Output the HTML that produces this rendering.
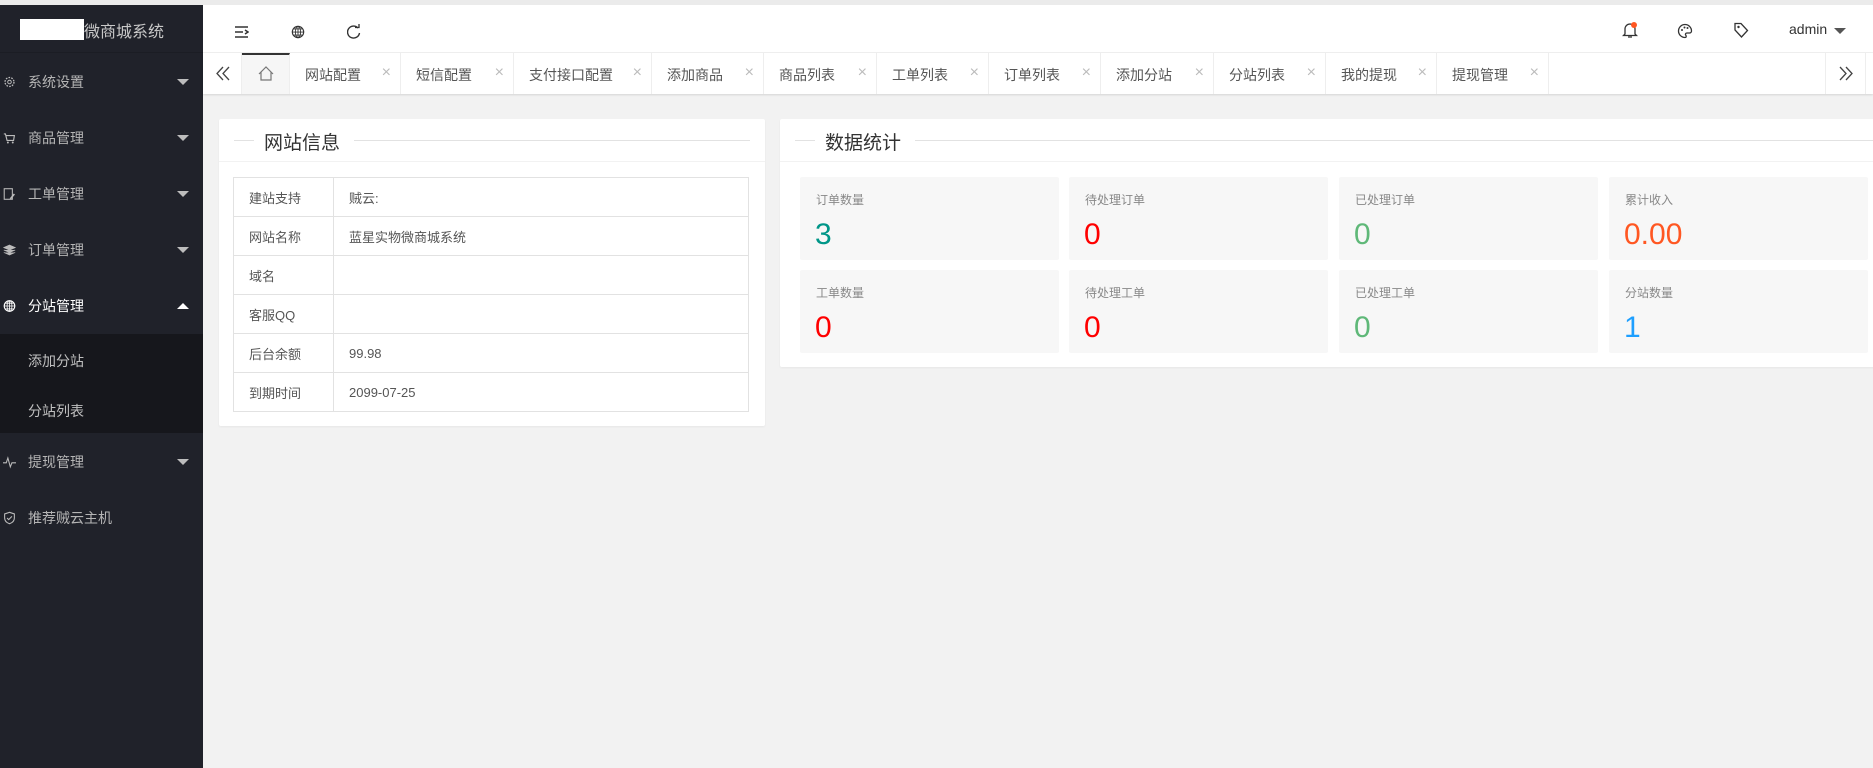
<!DOCTYPE html>
<html><head><meta charset="utf-8"><style>
*{margin:0;padding:0;box-sizing:border-box}
body{width:1873px;height:768px;overflow:hidden;background:#f2f2f2;font-family:"Liberation Sans","Noto Sans CJK SC",sans-serif;position:relative;font-size:14px;color:#333}
.topstrip{position:absolute;left:0;top:0;width:1873px;height:5px;background:#ebebeb}
.side{position:absolute;left:0;top:5px;width:203px;height:763px;background:#20222a}
.logo{position:absolute;left:0;top:0;width:203px;height:48px;border-bottom:1px solid #1b1d24}
.logo .w{position:absolute;left:20px;top:14px;width:64px;height:21px;background:#fff}
.logo span{position:absolute;left:84px;top:13px;font-size:16px;color:#c8c8c8}
.mi{position:absolute;left:0;width:203px;height:56px;color:#b5b5b5;font-size:14px}
.mi .t{position:absolute;left:28px;top:50%;transform:translateY(-50%)}
.mi .ic{position:absolute;left:3px;top:50%;transform:translateY(-50%);width:13px;height:13px}
.mi .ar{position:absolute;left:177px;top:50%;margin-top:-3px;width:0;height:0;border-left:6px solid transparent;border-right:6px solid transparent;border-top:6px solid #bdbdbd}
.mi .ar.up{border-top:0;border-bottom:6px solid #fff}
.sub{position:absolute;left:0;top:329px;width:203px;height:99px;background:#16171c}
.sub div{position:absolute;left:28px;color:#c0c0c0;font-size:14px}
.head{position:absolute;left:203px;top:5px;width:1670px;height:48px;background:#fff;border-bottom:1px solid #f0f0f0}
.tabs{position:absolute;left:203px;top:53px;width:1670px;height:41px;background:#fff;box-shadow:0 1px 2px rgba(0,0,0,.12)}
.tab{position:absolute;top:0;height:41px;border-right:1px solid #eee;color:#555;font-size:14px}
.tab .t{position:absolute;left:15px;top:12px}
.tab .x{position:absolute;right:9px;top:11px;color:#bbb;font-size:16px}
.card{position:absolute;background:#fff;border-radius:2px;box-shadow:0 1px 2px rgba(0,0,0,.05)}
.ch{position:absolute;left:0;top:0;right:0;height:43px;border-bottom:1px solid #f2f2f2}
.ch .l1{position:absolute;top:21px;height:1px;background:#e2e2e2}
.ch .tt{position:absolute;top:9px;font-size:19px;color:#333}
table{position:absolute;border-collapse:collapse;font-size:13px;color:#555}
td{border:1px solid #e2e2e2;height:39px;padding-left:15px}
.box{position:absolute;width:259px;height:83px;background:#f7f7f7;border-radius:2px}
.box .lb{position:absolute;left:16px;top:14px;font-size:12px;color:#888}
.box .n{position:absolute;left:15px;top:41px;font-size:30px}
</style></head><body>
<div class="topstrip"></div>
<div class="side">
 <div class="logo"><div class="w"></div><span>微商城系统</span></div>
 <div class="mi" style="top:49px"><svg class="ic" viewBox="0 0 16 16"><circle cx="8" cy="8" r="5.5" fill="none" stroke="#bbb" stroke-width="1.6" stroke-dasharray="2 1.5"/><circle cx="8" cy="8" r="2.2" fill="none" stroke="#bbb" stroke-width="1.2"/></svg><span class="t">系统设置</span><i class="ar"></i></div>
 <div class="mi" style="top:105px"><svg class="ic" viewBox="0 0 16 16"><path d="M1 3h2l2 8h8l1-6H4" fill="none" stroke="#bbb" stroke-width="1.4"/><circle cx="6" cy="13.5" r="1.2" fill="#bbb"/><circle cx="12" cy="13.5" r="1.2" fill="#bbb"/></svg><span class="t">商品管理</span><i class="ar"></i></div>
 <div class="mi" style="top:161px"><svg class="ic" viewBox="0 0 16 16"><rect x="1.5" y="1.5" width="10" height="13" fill="none" stroke="#bbb" stroke-width="1.3"/><path d="M9 14l5-6" stroke="#bbb" stroke-width="2"/></svg><span class="t">工单管理</span><i class="ar"></i></div>
 <div class="mi" style="top:217px"><svg class="ic" viewBox="0 0 16 16"><path d="M8 2l7 3-7 3-7-3z M1 8l7 3 7-3 M1 11l7 3 7-3" fill="#bbb" stroke="#bbb" stroke-width="1"/></svg><span class="t">订单管理</span><i class="ar"></i></div>
 <div class="mi" style="top:273px;color:#fff"><svg class="ic" viewBox="0 0 16 16"><circle cx="8" cy="8" r="6.5" fill="none" stroke="#fff" stroke-width="1.4"/><path d="M1.5 8h13M8 1.5v13M3 4.5h10M3 11.5h10" stroke="#fff" stroke-width="1"/><ellipse cx="8" cy="8" rx="3" ry="6.5" fill="none" stroke="#fff"/></svg><span class="t">分站管理</span><i class="ar up"></i></div>
 <div class="sub"><div style="top:17px">添加分站</div><div style="top:67px">分站列表</div></div>
 <div class="mi" style="top:429px"><svg class="ic" viewBox="0 0 16 16"><path d="M0 9h4l2-6 3 11 2-5h5" fill="none" stroke="#bbb" stroke-width="1.3"/></svg><span class="t">提现管理</span><i class="ar"></i></div>
 <div class="mi" style="top:485px"><svg class="ic" viewBox="0 0 16 16"><path d="M8 1l6 2v5c0 4-3 6-6 7-3-1-6-3-6-7V3z" fill="none" stroke="#bbb" stroke-width="1.3"/><path d="M5 8l2 2 4-4" fill="none" stroke="#bbb" stroke-width="1.3"/></svg><span class="t">推荐贼云主机</span></div>
</div>
<div class="head">
 <svg style="position:absolute;left:32px;top:21px" width="14" height="12" viewBox="0 0 14 12"><path d="M0 1h13M0 6h8M0 11h13M10 4l3 2-3 2" fill="none" stroke="#333" stroke-width="1.5"/></svg>
 <svg style="position:absolute;left:88px;top:20px" width="14" height="14" viewBox="0 0 16 16"><circle cx="8" cy="8" r="6.5" fill="none" stroke="#333" stroke-width="1.3"/><ellipse cx="8" cy="8" rx="3" ry="6.5" fill="none" stroke="#333"/><path d="M1.5 8h13M8 1.5v13M3 4.5h10M3 11.5h10" stroke="#333" stroke-width="1"/></svg>
 <svg style="position:absolute;left:144px;top:19px" width="14" height="16" viewBox="0 0 14 16"><path d="M11 4A6 6 0 1 0 12.5 9" fill="none" stroke="#333" stroke-width="1.4"/><path d="M8 3.5h4v-4" fill="none" stroke="#333" stroke-width="1.3"/></svg>
 <svg style="position:absolute;left:1419px;top:17px" width="16" height="17" viewBox="0 0 16 17"><path d="M3 12V7a5 5 0 0 1 10 0v5l1.5 1.5h-13zM6 15h4" fill="none" stroke="#333" stroke-width="1.3"/><circle cx="12" cy="3" r="3" fill="#ff5722"/></svg>
 <svg style="position:absolute;left:1474px;top:18px" width="16" height="16" viewBox="0 0 16 16"><path d="M8 1.5a6.5 6.5 0 0 0 0 13c1.5 0 1.5-1.5.7-2.4-.7-.9 0-2.1 1.3-2.1h2.5A2 2 0 0 0 14.5 8 6.5 6.5 0 0 0 8 1.5z" fill="none" stroke="#333" stroke-width="1.3"/><circle cx="5" cy="7" r="1" fill="#333"/><circle cx="7.5" cy="4.5" r="1" fill="#333"/><circle cx="10.5" cy="5" r="1" fill="#333"/></svg>
 <svg style="position:absolute;left:1530px;top:17px" width="16" height="17" viewBox="0 0 16 17"><path d="M2 1.5h6l6.5 7-6 6.5-6.5-7z" fill="none" stroke="#333" stroke-width="1.3"/><circle cx="5.5" cy="5" r="1.2" fill="#333"/></svg>
 <span style="position:absolute;left:1586px;top:16px;font-size:14px;color:#333">admin</span>
 <i style="position:absolute;left:1631px;top:23px;border-left:6px solid transparent;border-right:6px solid transparent;border-top:6px solid #555"></i>
</div>
<div class="tabs">
 <div class="tab" style="left:0;width:39px"><svg style="position:absolute;left:13px;top:13px" width="14" height="15" viewBox="0 0 14 15"><path d="M7 1L1 7.5 7 14M13 1L7 7.5 13 14" fill="none" stroke="#444" stroke-width="1.3"/></svg></div>
 <div class="tab" style="left:39px;width:48px;background:#f6f6f6;border-top:2px solid #333"><svg style="position:absolute;left:16px;top:11px" width="16" height="15" viewBox="0 0 16 15"><path d="M1 8L8 1l7 7M3 6v8h10V6" fill="none" stroke="#777" stroke-width="1.2"/></svg></div>
 <div class="tab" style="left:87px;width:111px"><span class="t">网站配置</span><span class="x">×</span></div>
 <div class="tab" style="left:198px;width:113px"><span class="t">短信配置</span><span class="x">×</span></div>
 <div class="tab" style="left:311px;width:138px"><span class="t">支付接口配置</span><span class="x">×</span></div>
 <div class="tab" style="left:449px;width:112px"><span class="t">添加商品</span><span class="x">×</span></div>
 <div class="tab" style="left:561px;width:113px"><span class="t">商品列表</span><span class="x">×</span></div>
 <div class="tab" style="left:674px;width:112px"><span class="t">工单列表</span><span class="x">×</span></div>
 <div class="tab" style="left:786px;width:112px"><span class="t">订单列表</span><span class="x">×</span></div>
 <div class="tab" style="left:898px;width:113px"><span class="t">添加分站</span><span class="x">×</span></div>
 <div class="tab" style="left:1011px;width:112px"><span class="t">分站列表</span><span class="x">×</span></div>
 <div class="tab" style="left:1123px;width:111px"><span class="t">我的提现</span><span class="x">×</span></div>
 <div class="tab" style="left:1234px;width:112px"><span class="t">提现管理</span><span class="x">×</span></div>
 <div class="tab" style="left:1622px;width:41px;border-left:1px solid #eee"><svg style="position:absolute;left:13px;top:13px" width="14" height="15" viewBox="0 0 14 15"><path d="M1 1l6 6.5L1 14M7 1l6 6.5L7 14" fill="none" stroke="#444" stroke-width="1.3"/></svg></div>
</div>
<div class="card" style="left:219px;top:119px;width:546px;height:307px">
 <div class="ch"><div class="l1" style="left:15px;width:20px"></div><span class="tt" style="left:45px">网站信息</span><div class="l1" style="left:135px;width:396px"></div></div>
 <table style="left:14px;top:58px;width:516px">
  <tr><td style="width:100px">建站支持</td><td>贼云:</td></tr>
  <tr><td>网站名称</td><td>蓝星实物微商城系统</td></tr>
  <tr><td>域名</td><td></td></tr>
  <tr><td>客服QQ</td><td></td></tr>
  <tr><td>后台余额</td><td>99.98</td></tr>
  <tr><td>到期时间</td><td>2099-07-25</td></tr>
 </table>
</div>
<div class="card" style="left:780px;top:119px;width:1100px;height:248px">
 <div class="ch"><div class="l1" style="left:15px;width:20px"></div><span class="tt" style="left:45px">数据统计</span><div class="l1" style="left:135px;width:960px"></div></div>
 <div class="box" style="left:20px;top:58px"><span class="lb">订单数量</span><span class="n" style="color:#009688">3</span></div>
 <div class="box" style="left:289px;top:58px"><span class="lb">待处理订单</span><span class="n" style="color:#f00">0</span></div>
 <div class="box" style="left:559px;top:58px"><span class="lb">已处理订单</span><span class="n" style="color:#5fb878">0</span></div>
 <div class="box" style="left:829px;top:58px"><span class="lb">累计收入</span><span class="n" style="color:#ff5722">0.00</span></div>
 <div class="box" style="left:20px;top:151px"><span class="lb">工单数量</span><span class="n" style="color:#f00">0</span></div>
 <div class="box" style="left:289px;top:151px"><span class="lb">待处理工单</span><span class="n" style="color:#f00">0</span></div>
 <div class="box" style="left:559px;top:151px"><span class="lb">已处理工单</span><span class="n" style="color:#5fb878">0</span></div>
 <div class="box" style="left:829px;top:151px"><span class="lb">分站数量</span><span class="n" style="color:#1e9fff">1</span></div>
</div>
</body></html>
